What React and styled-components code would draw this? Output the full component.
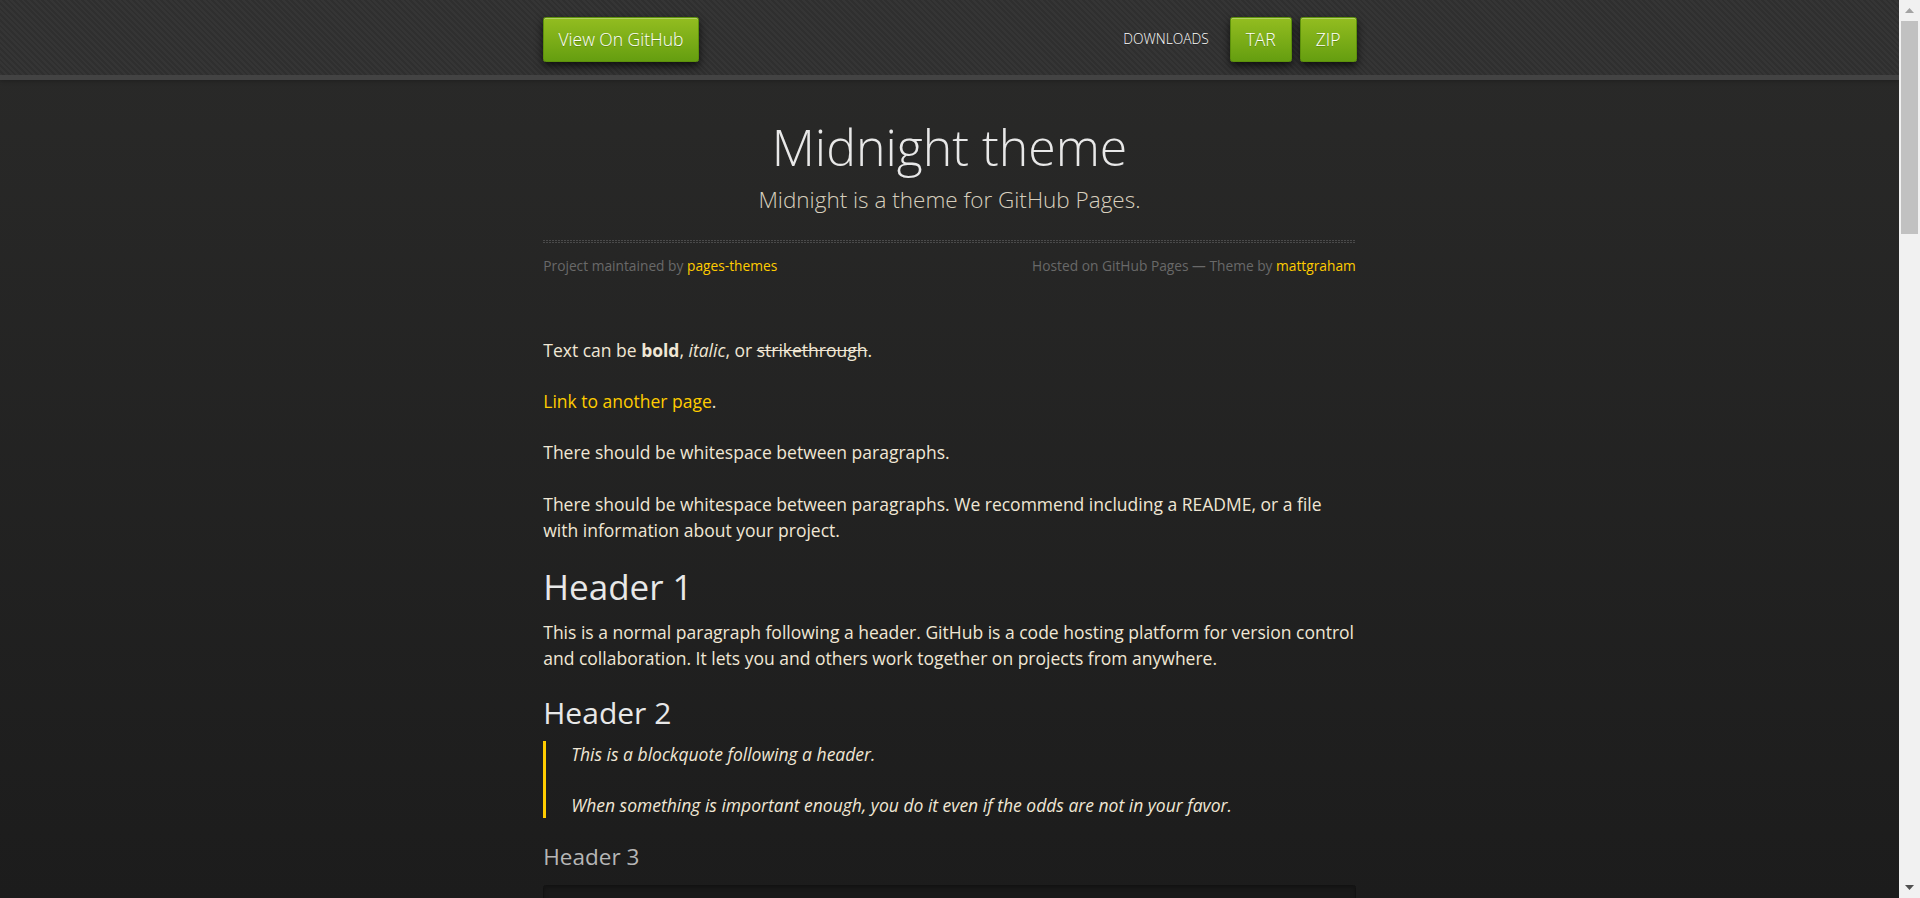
import styled, { createGlobalStyle } from 'styled-components';

// Midnight theme, laid out at the 125% scale the screenshot was taken at
const GlobalStyle = createGlobalStyle`
  html, body {
    margin: 0;
    padding: 0;
  }
  body {
    font: 17.5px/1.5 "Open Sans", "Liberation Sans", Arial, sans-serif;
    color: #f0e7d5;
    background: #1c1c1c;
  }
`;

const Shell = styled.div`
  display: flex;
  height: 100vh;
  overflow: hidden;
`;

const Page = styled.div`
  flex: 1;
  min-width: 0;
  overflow: hidden;
  background: linear-gradient(#2a2a29, #1c1c1c);
`;

const ScrollRail = styled.div`
  width: 21px;
  flex-shrink: 0;
  display: flex;
  flex-direction: column;
  background: #f1f1f1;
`;

const RailArrow = styled.div`
  height: 21px;
  display: flex;
  align-items: center;
  justify-content: center;
  flex-shrink: 0;
`;

const RailTrack = styled.div`
  flex: 1;
  padding: 0 2px;
`;

const RailThumb = styled.div`
  height: 213px;
  background: #c1c1c1;
`;

const TopBar = styled.header`
  height: 75px;
  background-color: #333;
  background-image: repeating-linear-gradient(
    45deg,
    #353535 0px,
    #353535 2px,
    #2f2f2f 2px,
    #2f2f2f 4px
  );
  border-bottom: 5px solid #434343;
  box-shadow: 0 1px 4px rgba(0, 0, 0, 0.25);
`;

const Nav = styled.nav`
  max-width: 814px;
  margin: 0 auto;
  height: 100%;
  box-sizing: border-box;
  padding-top: 4px;
  display: flex;
  align-items: center;
  gap: 8px;
`;

const Spacer = styled.div`
  flex: 1;
`;

const NavLabel = styled.span`
  font-family: "Open Sans", sans-serif;
  font-weight: 300;
  font-size: 13.75px;
  color: #fff;
  text-shadow: 0 1px 0 rgba(0, 0, 0, 0.2);
  margin-right: 13px;
`;

const GreenButton = styled.a`
  display: inline-block;
  font-family: "Open Sans", sans-serif;
  font-weight: 300;
  font-size: 17.5px;
  line-height: 17.5px;
  padding: 12.5px 15px;
  color: #fff;
  text-decoration: none;
  text-shadow: 0 1px 0 rgba(0, 0, 0, 0.2);
  border: 1px solid #5d910b;
  border-radius: 2.5px;
  background: linear-gradient(#93bd20, #659e10);
  box-shadow: inset 0 1px 0 rgba(255, 255, 255, 0.3), 0 4px 9px rgba(0, 0, 0, 0.7);
`;

const Wrapper = styled.section`
  max-width: 812.5px;
  margin: 0 auto;
  padding: 45px 0 60px;
`;

const TitleBlock = styled.div`
  margin-bottom: 60px;
`;

const SiteTitle = styled.h1`
  font-family: "Open Sans", sans-serif;
  font-weight: 300;
  font-size: 50px;
  line-height: 45px;
  text-align: center;
  color: #e8e8e8;
  margin: 0 0 12.5px;
`;

const Tagline = styled.p`
  font-family: "Open Sans", sans-serif;
  font-weight: 300;
  font-size: 22.5px;
  line-height: 33.75px;
  text-align: center;
  color: #d7cfbe;
  margin: 0 0 24px;
`;

const DashRule = styled.div`
  height: 3px;
  background:
    repeating-linear-gradient(90deg, #4a4a4a 0 2px, transparent 2px 3px) top / 100% 1px no-repeat,
    repeating-linear-gradient(90deg, #4a4a4a 0 2px, transparent 2px 3px) bottom / 100% 1px no-repeat;
  margin-bottom: 13px;
`;

const Credits = styled.div`
  display: flex;
  justify-content: space-between;
  font-size: 13.75px;
  line-height: 20.6px;
  color: #696969;
`;

const A = styled.a`
  color: #ffcc00;
  text-decoration: none;
`;

const P = styled.p`
  margin: 0 0 25px;
`;

const Strong = styled.strong`
  font-weight: 700;
`;

const H1 = styled.h1`
  font-weight: 400;
  font-size: 35px;
  line-height: 1.1;
  color: #e8e8e8;
  margin: 0 0 12.5px;
`;

const H2 = styled.h2`
  font-weight: 400;
  font-size: 30px;
  line-height: 1.1;
  color: #e8e8e8;
  margin: -1px 0 12px;
`;

const H3 = styled.h3`
  font-weight: 400;
  font-size: 22.5px;
  line-height: 30px;
  color: #b6b6b6;
  margin: 0 0 12.5px;
`;

const Quote = styled.blockquote`
  margin: 0;
  padding: 0 0 0 25px;
  border-left: 3.75px solid #ffcc00;
  font-style: italic;

  & > p:last-child {
    margin-bottom: 24px;
  }
`;

const Pre = styled.pre`
  margin: 0 0 25px;
  padding: 14px 18.75px 10px;
  background: #191919;
  border: 1px solid #121212;
  border-radius: 2.5px;
  box-shadow: inset 0 1px 4px rgba(0, 0, 0, 0.3);
  overflow: hidden;
  font-family: "DejaVu Sans Mono", "Liberation Mono", monospace;
  font-size: 16px;
  line-height: 1.5;
  color: #efefef;
`;

const Tok = styled.span`
  color: ${(p) => p.$c};
  font-style: ${(p) => (p.$i ? 'italic' : 'normal')};
`;

const Arrow = ({ up }) => (
  <svg width="9" height="5" viewBox="0 0 9 5">
    <polygon
      points={up ? '0,5 4.5,0 9,5' : '0,0 9,0 4.5,5'}
      fill={up ? '#a3a3a3' : '#505050'}
    />
  </svg>
);

export default function App() {
  return (
    <>
      <GlobalStyle />
      <Shell>
        <Page>
          <TopBar>
            <Nav>
              <GreenButton href="#">View On GitHub</GreenButton>
              <Spacer />
              <NavLabel>DOWNLOADS</NavLabel>
              <GreenButton href="#">TAR</GreenButton>
              <GreenButton href="#">ZIP</GreenButton>
            </Nav>
          </TopBar>

          <Wrapper>
            <TitleBlock>
              <SiteTitle>Midnight theme</SiteTitle>
              <Tagline>Midnight is a theme for GitHub Pages.</Tagline>
              <DashRule />
              <Credits>
                <span>Project maintained by <A href="#">pages-themes</A></span>
                <span>Hosted on GitHub Pages — Theme by <A href="#">mattgraham</A></span>
              </Credits>
            </TitleBlock>

            <P>
              Text can be <Strong>bold</Strong>, <em>italic</em>, or <del>strikethrough</del>.
            </P>
            <P><A href="#">Link to another page</A>.</P>
            <P>There should be whitespace between paragraphs.</P>
            <P>
              There should be whitespace between paragraphs. We recommend including a README, or a file
              with information about your project.
            </P>

            <H1>Header 1</H1>
            <P>
              This is a normal paragraph following a header. GitHub is a code hosting platform for version
              control and collaboration. It lets you and others work together on projects from anywhere.
            </P>

            <H2>Header 2</H2>
            <Quote>
              <P>This is a blockquote following a header.</P>
              <P>When something is important enough, you do it even if the odds are not in your favor.</P>
            </Quote>

            <H3>Header 3</H3>
            <Pre>
              <Tok $c="#888" $i>// Javascript code with syntax highlighting.</Tok>{'\n'}
              <Tok $c="#ffcc00">var</Tok> fun = <Tok $c="#ffcc00">function</Tok> lang(l) {'{'}{'\n'}
              {'  '}dateformat.i18n = require(<Tok $c="#a6e22e">'./lang/'</Tok> + l){'\n'}
              {'  '}<Tok $c="#ffcc00">return</Tok> <Tok $c="#66d9ef">true</Tok>;{'\n'}
              {'}'}
            </Pre>
          </Wrapper>
        </Page>

        <ScrollRail>
          <RailArrow><Arrow up /></RailArrow>
          <RailTrack>
            <RailThumb />
          </RailTrack>
          <RailArrow><Arrow /></RailArrow>
        </ScrollRail>
      </Shell>
    </>
  );
}
